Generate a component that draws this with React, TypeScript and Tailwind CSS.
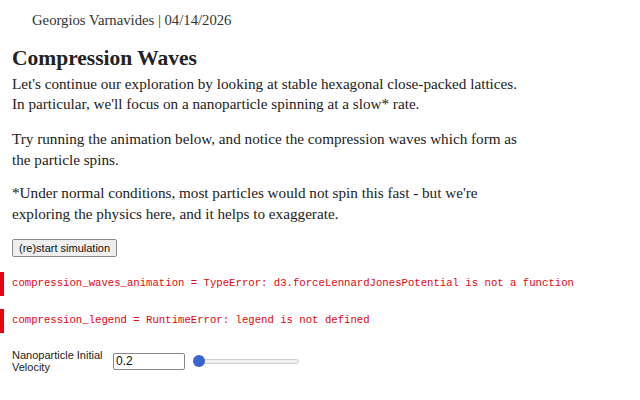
export default function App() {
  const serif = { fontFamily: '"Liberation Serif", "DejaVu Serif", serif' };
  return (
    <div className="w-[640px] h-[400px] bg-white text-[#1b1e23] overflow-hidden">
      <div className="pl-[12px] pt-[10px]" style={serif}>
        <div className="pl-[20px] text-[14.7px] leading-[20px] text-[#333]">Georgios Varnavides | 04/14/2026</div>
        <h1 className="mt-[15px] text-[21.5px] leading-[26px] font-bold text-[#222]">Compression Waves</h1>
        <p className="mt-[3px] text-[15.2px] leading-[20px] text-[#222]">
          Let's continue our exploration by looking at stable hexagonal close-packed lattices.
          <br />
          In particular, we'll focus on a nanoparticle spinning at a slow* rate.
        </p>
        <p className="mt-[14px] text-[15.2px] leading-[21px] text-[#222]">
          Try running the animation below, and notice the compression waves which form as
          <br />
          the particle spins.
        </p>
        <p className="mt-[12px] text-[15.2px] leading-[21px] text-[#222]">
          *Under normal conditions, most particles would not spin this fast - but we're
          <br />
          exploring the physics here, and it helps to exaggerate.
        </p>
      </div>
      <div className="pl-[12px] mt-[10px]">
        <button
          className="h-[18px] px-[6px] text-[11px] leading-[16px] text-[#111] bg-[#efefef] border border-[#8a8a8a] rounded-[2px]"
          style={{ fontFamily: '"Liberation Sans", Arial, sans-serif' }}
        >
          (re)start simulation
        </button>
      </div>
      <div
        className="mt-[14px] flex flex-col gap-[13px] text-[#e7040f] text-[10.65px]"
        style={{ fontFamily: '"Liberation Mono", "DejaVu Sans Mono", monospace' }}
      >
        <div className="flex items-center h-[24px] border-l-4 border-[#e7040f] pl-[8px]">
          compression_waves_animation = TypeError: d3.forceLennardJonesPotential is not a function
        </div>
        <div className="flex items-center h-[24px] border-l-4 border-[#e7040f] pl-[8px]">
          compression_legend = RuntimeError: legend is not defined
        </div>
      </div>
      <div
        className="mt-[16px] pl-[12px] flex items-center text-[11px] text-[#222]"
        style={{ fontFamily: '"Liberation Sans", Arial, sans-serif' }}
      >
        <label className="w-[101px] leading-[12px]">Nanoparticle Initial Velocity</label>
        <input
          defaultValue="0.2"
          className="w-[72px] h-[17px] border border-[#888] rounded-[2px] px-[2px] text-[12px] text-[#111]"
        />
        <div className="ml-[8px] relative w-[106px] h-[12px] flex items-center">
          <div className="w-full h-[5px] rounded-full bg-[#efefef] border border-[#cfcfcf]" />
          <div className="absolute left-0 w-[12px] h-[12px] rounded-full bg-[#3b63d1]" />
        </div>
      </div>
    </div>
  );
}
